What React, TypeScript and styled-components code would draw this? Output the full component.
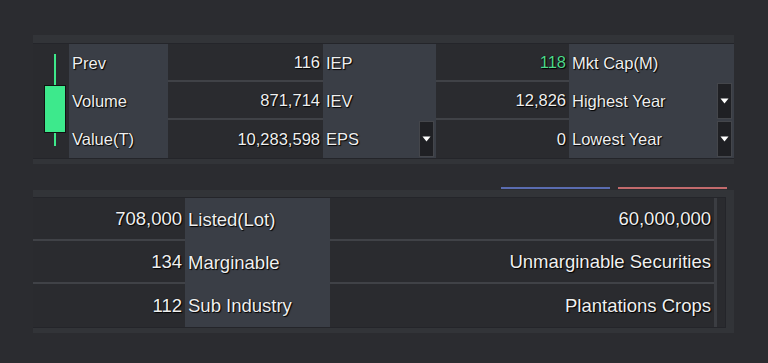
import React from "react";
import styled, { createGlobalStyle } from "styled-components";

const GlobalStyle = createGlobalStyle`
  body {
    margin: 0;
    background: #2b2c30;
    font-family: "Liberation Sans", Arial, sans-serif;
  }
`;

const Page = styled.div`
  width: 768px;
  height: 363px;
  padding: 35px 0 0 33px;
  box-sizing: border-box;
  display: flex;
  flex-direction: column;
`;

const Frame = styled.div<{ $pad: string }>`
  width: 701px;
  background: #323438;
  padding: ${(p) => p.$pad};
  box-sizing: border-box;
`;

const TopGrid = styled.div`
  display: grid;
  grid-template-columns: 36px 99px 155px 113px 133px 165px;
  grid-template-rows: repeat(3, 38px);
  border-top: 1px solid #24252a;
  border-bottom: 1px solid #24252a;
`;

const CandleCell = styled.div`
  grid-row: 1 / 4;
  background: #2a2b2f;
  display: flex;
  justify-content: center;
  padding: 10px 0 0 7px;
`;

const Label = styled.div<{ $size?: number }>`
  background: #3a3e46;
  color: #f0f0f0;
  font-size: ${(p) => p.$size ?? 16.5}px;
  display: flex;
  align-items: center;
  padding-left: 3px;
  position: relative;
  text-shadow: 1px 1px 1px #000, 0 0 1px #000;
  white-space: nowrap;
`;

const Value = styled.div<{ $size?: number; $color?: string; $last?: boolean }>`
  background: #2a2b2f;
  color: ${(p) => p.$color ?? "#f0f0f0"};
  font-size: ${(p) => p.$size ?? 16.5}px;
  display: flex;
  align-items: center;
  justify-content: flex-end;
  padding-right: 3px;
  border-bottom: ${(p) => (p.$last ? "none" : "2px solid #404247")};
  text-shadow: 1px 1px 1px #000, 0 0 1px #000;
  white-space: nowrap;
`;

const Drop = styled.div`
  position: absolute;
  right: 2px;
  top: 1px;
  bottom: 1px;
  width: 15px;
  background: #1f2024;
  border: 1px solid #44464b;
  box-sizing: border-box;
  display: flex;
  align-items: center;
  justify-content: center;
`;

const Legend = styled.div`
  width: 701px;
  display: flex;
  justify-content: flex-end;
  gap: 8px;
  padding: 0 7px 1px 0;
  margin-top: 23px;
  box-sizing: border-box;
`;

const LegendLine = styled.div<{ $color: string }>`
  width: 109px;
  height: 2px;
  background: ${(p) => p.$color};
`;

const BottomGrid = styled.div`
  display: grid;
  grid-template-columns: 152px 145px 384px 12px;
  grid-template-rows: 43px 43px 43px;
  border-top: 1px solid #24252a;
  border-bottom: 1px solid #24252a;
`;

const Scroll = styled.div`
  grid-column: 4;
  grid-row: 1 / 4;
  background: #2a2b2f;
  border-left: 3px solid #3b3d42;
  border-right: 1px solid #24252a;
`;

const Arrow = () => (
  <svg width="9" height="6" viewBox="0 0 9 6">
    <path d="M0.5 0.5 H8.5 L4.5 5.5 Z" fill="#ffffff" />
  </svg>
);

const Candle = () => (
  <svg width="24" height="94" viewBox="0 0 24 94">
    <line x1="12" y1="0" x2="12" y2="92" stroke="#3ee88a" strokeWidth="2" />
    <rect x="1.5" y="31.5" width="21" height="47" fill="#3de98c" stroke="#111" strokeWidth="1" />
  </svg>
);

const topRows = [
  ["Prev", "116", "IEP", "118", "Mkt Cap(M)"],
  ["Volume", "871,714", "IEV", "12,826", "Highest Year"],
  ["Value(T)", "10,283,598", "EPS", "0", "Lowest Year"],
];

const bottomRows = [
  ["708,000", "Listed(Lot)", "60,000,000"],
  ["134", "Marginable", "Unmarginable Securities"],
  ["112", "Sub Industry", "Plantations Crops"],
];

export default function App() {
  return (
    <>
      <GlobalStyle />
      <Page>
        <Frame $pad="8px 0 5px 0">
          <TopGrid>
            <CandleCell>
              <Candle />
            </CandleCell>
            {topRows.map((r, i) => (
              <React.Fragment key={r[0]}>
                <Label>{r[0]}</Label>
                <Value $last={i === 2}>{r[1]}</Value>
                <Label>
                  {r[2]}
                  {i === 2 && (
                    <Drop>
                      <Arrow />
                    </Drop>
                  )}
                </Label>
                <Value $last={i === 2} $color={i === 0 ? "#4fd98c" : undefined}>
                  {r[3]}
                </Value>
                <Label>
                  {r[4]}
                  {i > 0 && (
                    <Drop>
                      <Arrow />
                    </Drop>
                  )}
                </Label>
              </React.Fragment>
            ))}
          </TopGrid>
        </Frame>
        <Legend>
          <LegendLine $color="#5a6cb0" />
          <LegendLine $color="#c26a6c" />
        </Legend>
        <Frame $pad="7px 8px 5px 0">
          <BottomGrid>
            {bottomRows.map((r, i) => (
              <React.Fragment key={r[1]}>
                <Value $size={18.5} $last={i === 2}>
                  {r[0]}
                </Value>
                <Label $size={18.5}>{r[1]}</Label>
                <Value $size={18.5} $last={i === 2}>
                  {r[2]}
                </Value>
              </React.Fragment>
            ))}
            <Scroll />
          </BottomGrid>
        </Frame>
      </Page>
    </>
  );
}
